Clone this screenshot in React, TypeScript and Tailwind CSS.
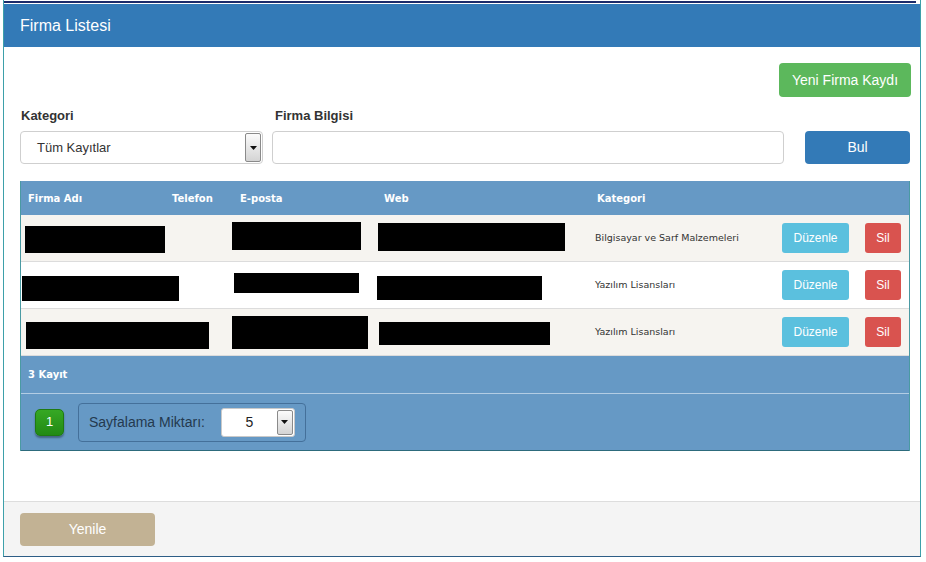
import React from "react";

type Box = [number, number, number, number]; // x (relative to table left), width, height, top offset

const rows: { boxes: Box[]; cat: string; bg: string }[] = [
  { boxes: [[5, 140, 27, 11], [212, 129, 28, 7], [358, 187, 28, 8]], cat: "Bilgisayar ve Sarf Malzemeleri", bg: "bg-[#f6f4f0]" },
  { boxes: [[2, 157, 25, 14], [214, 125, 20, 11], [357, 165, 24, 14]], cat: "Yazılım Lisansları", bg: "bg-white" },
  { boxes: [[6, 183, 27, 13], [212, 136, 33, 7], [359, 171, 23, 13]], cat: "Yazılım Lisansları", bg: "bg-[#f6f4f0]" },
];

const Arrow = () => (
  <div className="flex h-full w-[16px] items-center justify-center rounded-[2px] border border-[#8a8a8a] bg-gradient-to-b from-[#fbfbfb] to-[#d4d4d4]">
    <svg width="7" height="4" viewBox="0 0 7 4">
      <path d="M0 0 L7 0 L3.5 4 Z" fill="#111" />
    </svg>
  </div>
);

export default function App() {
  const sans = { fontFamily: '"Liberation Sans", Arial, sans-serif' };
  const tahoma = { fontFamily: '"DejaVu Sans", Verdana, sans-serif' };
  return (
    <div className="h-[562px] w-[926px] bg-white" style={sans}>
      <div className="ml-[3px] flex w-[918px] flex-col border-x border-b border-x-[#3da0aa] border-b-[#2d5d86]">
        <div className="h-[4px] pt-[1px]">
          <div className="h-[2px] w-[912px] bg-[#1b2a6a]" />
        </div>
        <div className="flex h-[43px] items-center bg-[#337ab7] pl-[16px] text-[16px] text-white">
          Firma Listesi
        </div>
        <div className="flex flex-col pl-[16px] pr-[9px] pt-[16px] pb-[50px]">
          <div className="flex justify-end">
            <button className="h-[34px] w-[132px] rounded-[4px] bg-[#5cb85c] text-[14px] text-white">
              Yeni Firma Kaydı
            </button>
          </div>
          <div className="mt-[9px] flex items-end">
            <div className="flex w-[243px] flex-col">
              <div className="h-[20px] pl-[1px] text-[13px] font-bold leading-[20px] text-[#333]">Kategori</div>
              <div className="mt-[5px] flex h-[33px] items-center rounded-[4px] border border-[#cfcfcf] bg-white pl-[16px] pr-[1px]">
                <span className="flex-1 text-[13px] text-[#333]">Tüm Kayıtlar</span>
                <div className="h-[29px]"><Arrow /></div>
              </div>
            </div>
            <div className="ml-[9px] flex w-[512px] flex-col">
              <div className="h-[20px] pl-[3px] text-[13px] font-bold leading-[20px] text-[#333]">Firma Bilgisi</div>
              <div className="mt-[5px] h-[33px] rounded-[4px] border border-[#cfcfcf] bg-white" />
            </div>
            <button className="ml-[21px] h-[33px] w-[105px] rounded-[4px] bg-[#337ab7] text-[14px] text-white">Bul</button>
          </div>

          <div className="mt-[17px] flex w-[890px] flex-col border-x border-[#4a9aa3]" style={tahoma}>
            <div className="flex h-[34px] items-center bg-[#6699c5] text-[10px] font-bold text-white">
              <span className="w-[151px] pl-[7px]">Firma Adı</span>
              <span className="w-[68px]">Telefon</span>
              <span className="w-[144px]">E-posta</span>
              <span className="w-[213px]">Web</span>
              <span>Kategori</span>
            </div>
            {rows.map((r, i) => {
              let prev = 1;
              return (
                <div key={i} className={`flex h-[47px] border-b border-[#dcdcdc] ${r.bg}`}>
                  {r.boxes.map((b, j) => {
                    const ml = b[0] - prev;
                    prev = b[0] + b[1];
                    return (
                      <div
                        key={j}
                        className="shrink-0 bg-black"
                        style={{ marginLeft: ml, width: b[1], height: b[2], marginTop: b[3] }}
                      />
                    );
                  })}
                  <div className="flex shrink-0 items-center" style={{ marginLeft: 567 - prev, width: 322 }}>
                    <span className="w-[195px] pl-[8px] text-[9.5px] text-[#333]">{r.cat}</span>
                    <button className="h-[30px] w-[67px] rounded-[3px] bg-[#5bc0de] text-[12px] text-white" style={sans}>
                      Düzenle
                    </button>
                    <button className="ml-[16px] h-[30px] w-[36px] rounded-[3px] bg-[#d9534f] text-[12px] text-white" style={sans}>
                      Sil
                    </button>
                  </div>
                </div>
              );
            })}
            <div className="flex h-[37px] items-center bg-[#6699c5] pl-[7px] text-[10px] font-bold text-white">3 Kayıt</div>
            <div className="flex h-[58px] items-center border-t border-b border-t-[#b3cde4] border-b-[#2d6b7c] bg-[#6699c5] pl-[14px]" style={sans}>
              <div className="flex h-[27px] w-[29px] items-center justify-center rounded-[5px] border border-[#1f7a12] bg-gradient-to-b from-[#36a824] to-[#228a14] text-[13px] text-white shadow-[0_2px_2px_rgba(0,0,0,0.35)]">
                1
              </div>
              <div className="ml-[14px] flex h-[39px] w-[228px] items-center rounded-[4px] border border-[#44709a] pl-[10px]">
                <span className="text-[14px] text-[#24394f]">Sayfalama Miktarı:</span>
                <div className="ml-[16px] flex h-[29px] w-[74px] items-center rounded-[3px] border border-[#c9c9c9] bg-white pr-[1px]">
                  <span className="flex-1 text-center text-[14px] text-[#222]">5</span>
                  <div className="h-[25px]"><Arrow /></div>
                </div>
              </div>
            </div>
          </div>
        </div>
        <div className="flex h-[55px] items-center border-t border-[#dddddd] bg-[#f4f4f4] pl-[16px]">
          <button className="h-[33px] w-[135px] rounded-[4px] bg-[#c2b294] text-[14px] text-white">Yenile</button>
        </div>
      </div>
    </div>
  );
}
